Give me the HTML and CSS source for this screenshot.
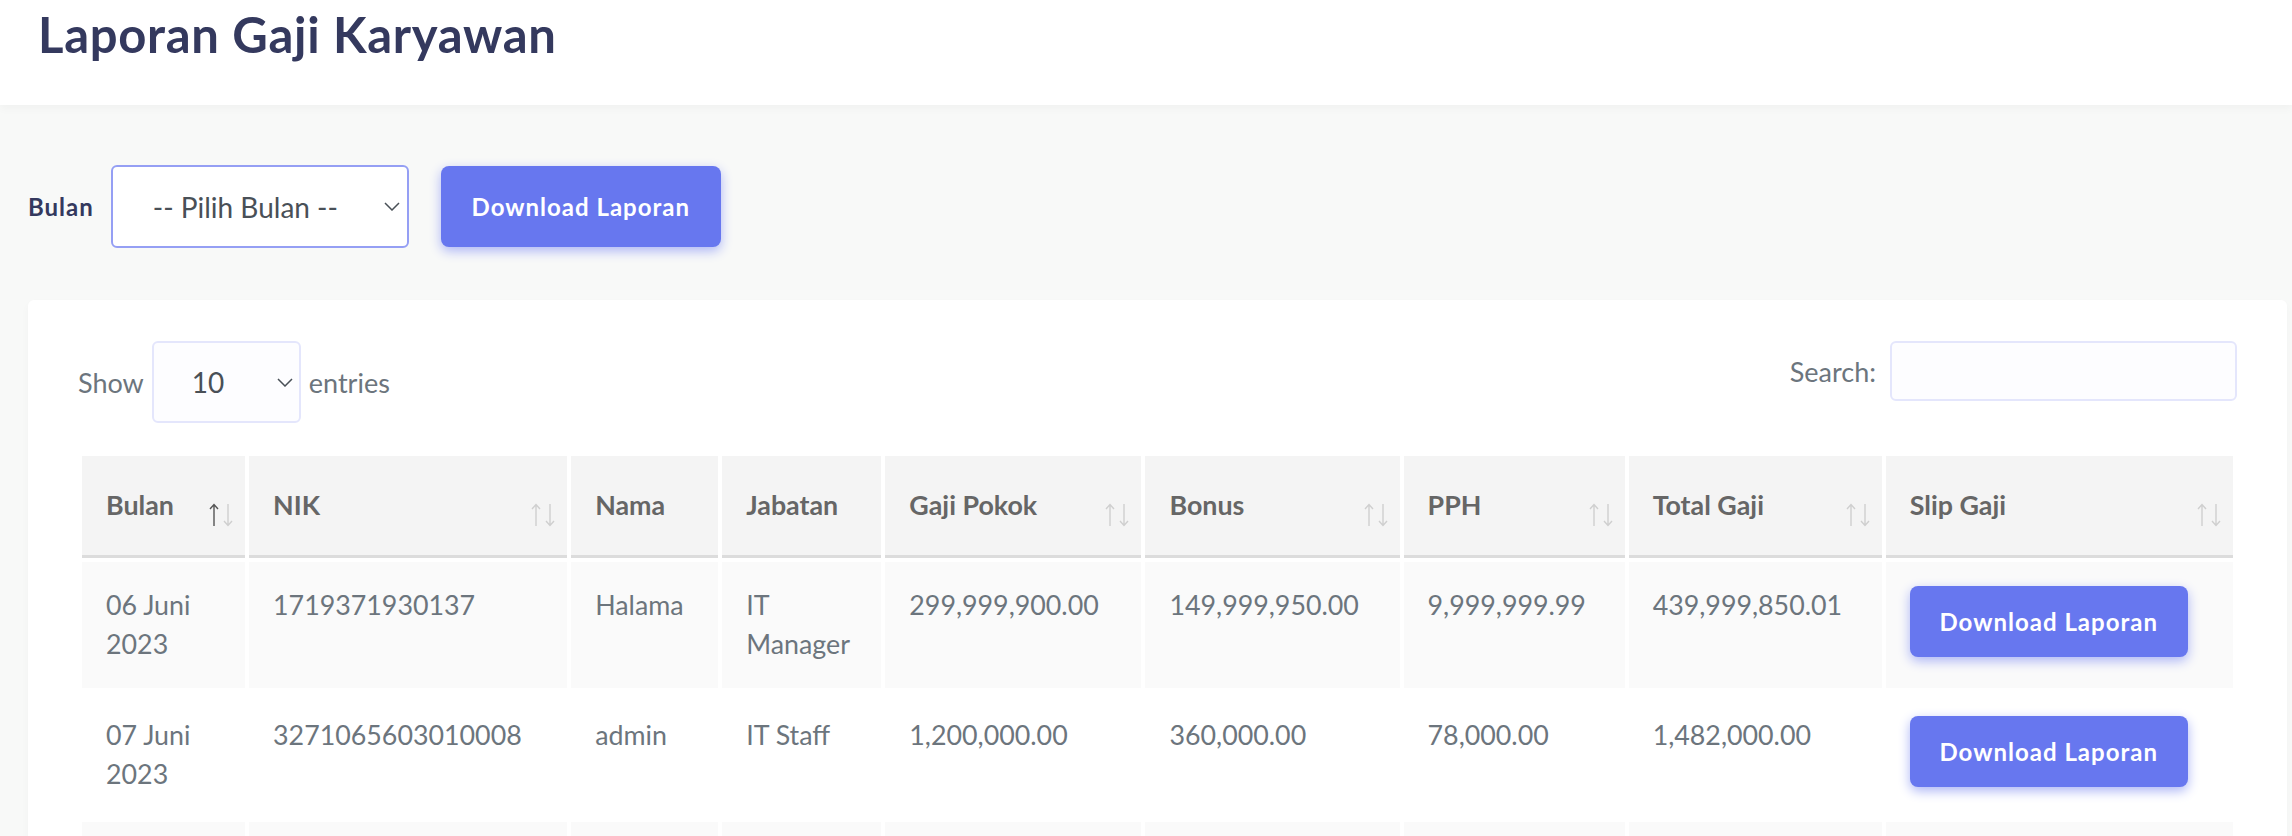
FILE: index.html
```html
<!DOCTYPE html>
<html lang="id">
<head>
<meta charset="utf-8">
<title>Laporan Gaji Karyawan</title>
<link rel="stylesheet" href="styles.css">
</head>
<body>
<header class="page-header">
  <h1 class="page-title">Laporan Gaji Karyawan</h1>
</header>

<section class="filter-row">
  <label class="filter-label" for="bulan">Bulan</label>
  <span class="select-wrap select-month">
    <select id="bulan" class="form-select focus">
      <option>-- Pilih Bulan --</option>
    </select>
    <svg class="chev" viewBox="0 0 16 9" width="16" height="9"><path d="M1 1 L8 8 L15 1" fill="none" stroke="#495057" stroke-width="1.5"/></svg>
  </span>
  <button class="btn btn-primary btn-top">Download Laporan</button>
</section>

<section class="card">
  <div class="dt-top">
    <div class="dt-length">
      <span>Show</span>
      <span class="select-wrap select-len">
        <select class="form-select">
          <option>10</option>
        </select>
        <svg class="chev" viewBox="0 0 16 9" width="16" height="9"><path d="M1 1 L8 8 L15 1" fill="none" stroke="#495057" stroke-width="1.5"/></svg>
      </span>
      <span>entries</span>
    </div>
    <div class="dt-search">
      <span>Search:</span>
      <input type="search" class="search-input">
    </div>
  </div>

  <table class="data-table">
    <thead>
      <tr>
        <th class="c-bulan sortable asc">Bulan<span class="sort"><svg class="up" viewBox="0 0 10 24" width="10" height="24"><path d="M5 23 V2 M1 6 L5 1.5 L9 6" fill="none" stroke-width="1.4"/></svg><svg class="down" viewBox="0 0 10 24" width="10" height="24"><path d="M5 1 V22 M1 18 L5 22.5 L9 18" fill="none" stroke-width="1.4"/></svg></span></th>
        <th class="c-nik sortable">NIK<span class="sort"><svg class="up" viewBox="0 0 10 24" width="10" height="24"><path d="M5 23 V2 M1 6 L5 1.5 L9 6" fill="none" stroke-width="1.4"/></svg><svg class="down" viewBox="0 0 10 24" width="10" height="24"><path d="M5 1 V22 M1 18 L5 22.5 L9 18" fill="none" stroke-width="1.4"/></svg></span></th>
        <th class="c-nama">Nama</th>
        <th class="c-jabatan">Jabatan</th>
        <th class="c-pokok sortable">Gaji Pokok<span class="sort"><svg class="up" viewBox="0 0 10 24" width="10" height="24"><path d="M5 23 V2 M1 6 L5 1.5 L9 6" fill="none" stroke-width="1.4"/></svg><svg class="down" viewBox="0 0 10 24" width="10" height="24"><path d="M5 1 V22 M1 18 L5 22.5 L9 18" fill="none" stroke-width="1.4"/></svg></span></th>
        <th class="c-bonus sortable">Bonus<span class="sort"><svg class="up" viewBox="0 0 10 24" width="10" height="24"><path d="M5 23 V2 M1 6 L5 1.5 L9 6" fill="none" stroke-width="1.4"/></svg><svg class="down" viewBox="0 0 10 24" width="10" height="24"><path d="M5 1 V22 M1 18 L5 22.5 L9 18" fill="none" stroke-width="1.4"/></svg></span></th>
        <th class="c-pph sortable">PPH<span class="sort"><svg class="up" viewBox="0 0 10 24" width="10" height="24"><path d="M5 23 V2 M1 6 L5 1.5 L9 6" fill="none" stroke-width="1.4"/></svg><svg class="down" viewBox="0 0 10 24" width="10" height="24"><path d="M5 1 V22 M1 18 L5 22.5 L9 18" fill="none" stroke-width="1.4"/></svg></span></th>
        <th class="c-total sortable">Total Gaji<span class="sort"><svg class="up" viewBox="0 0 10 24" width="10" height="24"><path d="M5 23 V2 M1 6 L5 1.5 L9 6" fill="none" stroke-width="1.4"/></svg><svg class="down" viewBox="0 0 10 24" width="10" height="24"><path d="M5 1 V22 M1 18 L5 22.5 L9 18" fill="none" stroke-width="1.4"/></svg></span></th>
        <th class="c-slip sortable">Slip Gaji<span class="sort"><svg class="up" viewBox="0 0 10 24" width="10" height="24"><path d="M5 23 V2 M1 6 L5 1.5 L9 6" fill="none" stroke-width="1.4"/></svg><svg class="down" viewBox="0 0 10 24" width="10" height="24"><path d="M5 1 V22 M1 18 L5 22.5 L9 18" fill="none" stroke-width="1.4"/></svg></span></th>
      </tr>
    </thead>
    <tbody>
      <tr class="odd">
        <td>06 Juni 2023</td>
        <td>1719371930137</td>
        <td>Halama</td>
        <td>IT Manager</td>
        <td>299,999,900.00</td>
        <td>149,999,950.00</td>
        <td>9,999,999.99</td>
        <td>439,999,850.01</td>
        <td><button class="btn btn-primary btn-row">Download Laporan</button></td>
      </tr>
      <tr class="even">
        <td>07 Juni 2023</td>
        <td>3271065603010008</td>
        <td>admin</td>
        <td>IT Staff</td>
        <td>1,200,000.00</td>
        <td>360,000.00</td>
        <td>78,000.00</td>
        <td>1,482,000.00</td>
        <td><button class="btn btn-primary btn-row">Download Laporan</button></td>
      </tr>
      <tr class="odd stub">
        <td></td>
        <td></td>
        <td></td>
        <td></td>
        <td></td>
        <td></td>
        <td></td>
        <td></td>
        <td></td>
      </tr>
    </tbody>
  </table>
</section>
</body>
</html>
```

FILE: styles.css
```css
* { box-sizing: border-box; }

html, body {
  margin: 0;
  padding: 0;
}

body {
  background: #f8f9f8;
  font-family: "Lato", "Noto Sans", sans-serif;
  color: #6c757d;
  font-size: 27px;
  overflow: hidden;
}

.page-header {
  height: 105px;
  background: #ffffff;
  padding: 6px 38px 0;
  box-shadow: 0 4px 8px rgba(0, 0, 0, 0.03);
  position: relative;
  z-index: 1;
}

.page-title {
  margin: 0;
  font-size: 49px;
  line-height: 56px;
  font-weight: 700;
  color: #34395e;
  letter-spacing: 0.7px;
}

.filter-row {
  display: flex;
  align-items: center;
  margin-top: 60px;
  padding-left: 28px;
}

.filter-label {
  font-size: 24px;
  font-weight: 700;
  color: #34395e;
  letter-spacing: 1px;
  margin-right: 17px;
}

.select-wrap {
  position: relative;
  display: inline-block;
}

.select-wrap .chev {
  position: absolute;
  top: 50%;
  margin-top: -5px;
  pointer-events: none;
}

.form-select {
  appearance: none;
  -webkit-appearance: none;
  font-family: inherit;
  font-size: 28px;
  color: #495057;
  background: #fdfdff;
  border: 2px solid #e4e6fc;
  border-radius: 6px;
  padding: 0 0 0 40px;
  outline: none;
}

.select-month .form-select {
  width: 298px;
  height: 83px;
  border-color: #959ff4;
  background: #ffffff;
}

.select-month .chev { right: 9px; }

.select-len .form-select {
  width: 149px;
  height: 82px;
  padding-left: 38px;
}

.select-len .chev { right: 8px; margin-top: -4px; }

.btn {
  font-family: inherit;
  font-weight: 700;
  font-size: 24px;
  letter-spacing: 1px;
  color: #ffffff;
  border: none;
  border-radius: 8px;
  cursor: pointer;
}

.btn-primary {
  background: #6777ef;
  box-shadow: 0 4px 12px #acb5f6;
}

.btn-top {
  margin-left: 32px;
  width: 280px;
  height: 81px;
  padding: 0;
}

.btn-row {
  width: 278px;
  height: 71px;
  padding: 0;
}

.card {
  margin: 52px 5px 0 28px;
  background: #ffffff;
  border-radius: 6px;
  box-shadow: 0 4px 8px rgba(0, 0, 0, 0.03);
  padding: 41px 50px 0 50px;
  height: 600px;
}

.dt-top {
  display: flex;
  justify-content: space-between;
  align-items: flex-start;
  height: 82px;
}

.dt-length {
  display: flex;
  align-items: center;
  height: 82px;
  gap: 8px;
}

.dt-search {
  display: flex;
  align-items: center;
  height: 60px;
  gap: 14px;
}

.search-input {
  width: 347px;
  height: 60px;
  border: 2px solid #e4e6fc;
  background: #fdfdff;
  border-radius: 6px;
  outline: none;
}

.data-table {
  width: 100%;
  margin-top: 29px;
  table-layout: fixed;
  border-collapse: separate;
  border-spacing: 4px;
}

.data-table th {
  position: relative;
  text-align: left;
  vertical-align: bottom;
  background: #f4f4f4;
  color: #666666;
  font-size: 26.8px;
  font-weight: 700;
  line-height: 39px;
  padding: 30px 50px 30px 24px;
  border-bottom: 3px solid #dcdcdc;
}

.c-bulan { width: 163px; }
.c-nik { width: 318px; }
.c-nama { width: 147px; }
.c-jabatan { width: 159px; }
.c-pokok { width: 256px; }
.c-bonus { width: 254px; }
.c-pph { width: 221px; }
.c-total { width: 253px; }
.c-slip { width: 347px; }

.sort {
  position: absolute;
  right: 12px;
  top: 47px;
  display: flex;
  gap: 4px;
}

.sort svg { display: block; stroke: #cfcfcf; }
.asc .sort .up { stroke: #555555; }

.data-table td {
  vertical-align: top;
  padding: 24px 24px;
  line-height: 39px;
  font-size: 26.8px;
  color: #6c757d;
}

.data-table tr.stub td { height: 126px; }

.data-table tr.odd td { background: #fafafa; }
.data-table tr.even td { background: #ffffff; }

.data-table td .btn-row { vertical-align: top; }
```
